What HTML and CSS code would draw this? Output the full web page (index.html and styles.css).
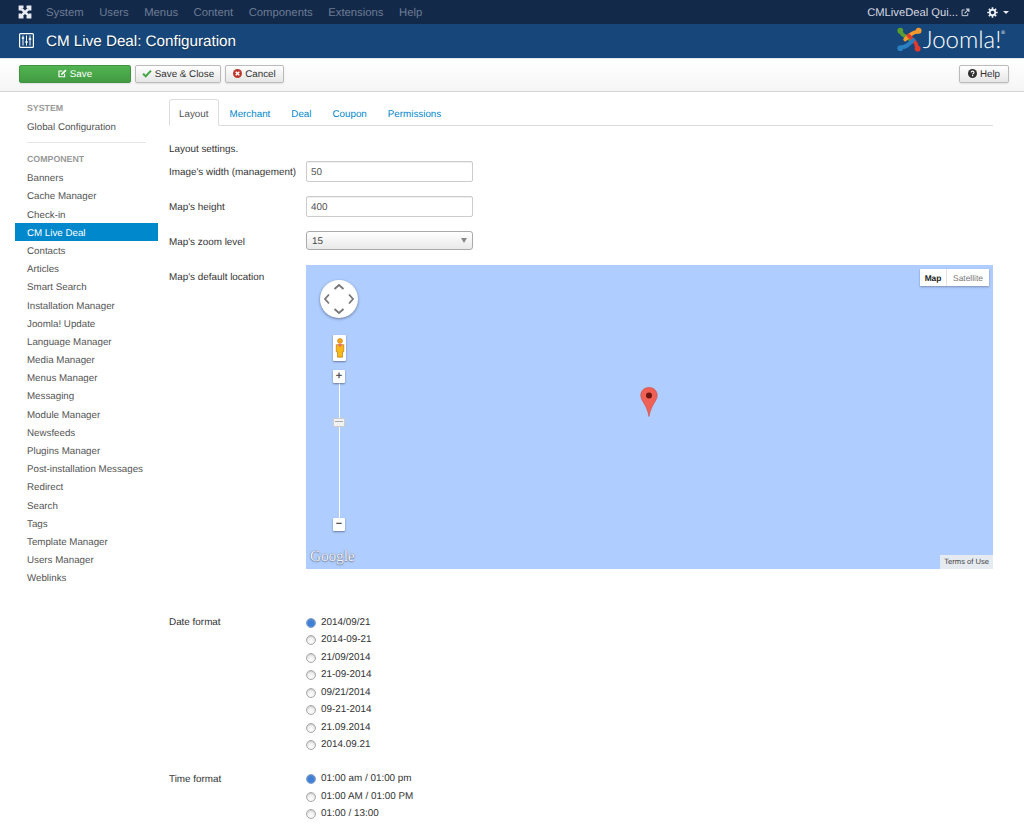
FILE: index.html
```html
<!DOCTYPE html>
<html lang="en">
<head>
<meta charset="utf-8">
<title>CM Live Deal: Configuration</title>
<link rel="stylesheet" href="styles.css">
</head>
<body>
<nav class="topnav">
  <svg class="brand" viewBox="0 0 16 16" width="16" height="16"><g fill="none" stroke="#e8ebf0" stroke-width="2.400"><path d="M4 4.500 L12 12"/><path d="M12 4.500 L4 12"/><path d="M2.800 6.500V2.800H6.500M9.500 2.800h3.700V6.500M13.200 9.500v3.700H9.500M6.500 13.200H2.800V9.500"/></g></svg>
  <ul class="menu">
    <li>System</li><li>Users</li><li>Menus</li><li>Content</li><li>Components</li><li>Extensions</li><li>Help</li>
  </ul>
  <div class="nav-right">
    <span class="site">CMLiveDeal Qui...</span>
    <svg class="ext" viewBox="0 0 10 10" width="9" height="9"><path d="M7.500 5.800V8.500H1.200V2.200H4" fill="none" stroke="#c8ced8" stroke-width="1.100"/><path d="M4 6L8 2M5.500 1.200H8.800V4.500" fill="none" stroke="#c8ced8" stroke-width="1.300"/></svg>
    <svg class="gear" viewBox="0 0 12 12" width="11" height="11"><circle cx="6" cy="6" r="3" fill="none" stroke="#e8ebf0" stroke-width="2"/><path d="M6 .3v2.200M6 9.500v2.200M.3 6h2.200M9.500 6h2.200M2 2l1.500 1.500M8.500 8.500L10 10M10 2L8.500 3.500M3.500 8.500L2 10" stroke="#e8ebf0" stroke-width="1.800"/></svg>
    <span class="caret"></span>
  </div>
</nav>
<header class="titlebar">
  <svg class="title-icon" viewBox="0 0 15 15" width="15" height="15"><rect x=".6" y=".6" width="13.800" height="13.800" rx="1" fill="none" stroke="#fff" stroke-width="1.200"/><path d="M4 2.500v10M7.500 2.500v10M11 2.500v10" stroke="#fff" stroke-width="1"/><path d="M2.800 5h2.400M6.300 9h2.400M9.800 6h2.400" stroke="#fff" stroke-width="1.600"/></svg>
  <h1>CM Live Deal: Configuration</h1>
  <div class="logo">
    <svg viewBox="0 0 26 26" width="25" height="25"><g fill="none" stroke-width="4" stroke-linecap="round"><path d="M4 5.500 C6 10 11 9.500 16 15" stroke="#5a9e32"/><path d="M21 5 C15.500 5 12.500 9 8.500 13" stroke="#f29a2e"/><path d="M20.500 20.500 C20.500 15.500 16.500 13.500 12 9" stroke="#e03a2f"/><path d="M5 21 C10 21 13 17.500 17 13.500" stroke="#2a7fc1"/></g><circle cx="3.400" cy="3.900" r="3" fill="#5a9e32"/><circle cx="22.500" cy="3.900" r="3" fill="#f29a2e"/><circle cx="21.500" cy="22.500" r="3" fill="#e03a2f"/><circle cx="3.400" cy="22" r="3" fill="#2a7fc1"/></svg>
    <span class="wordmark">Joomla!</span><sup class="reg">®</sup>
  </div>
</header>
<div class="toolbar">
  <button class="btn btn-save"><svg viewBox="0 0 11 11" width="9" height="9"><path d="M8 5.800V9.500H1.200V2.500H5.500" fill="none" stroke="#fff" stroke-width="1.400"/><path d="M3.800 7.300l.5-2L9 .7l1.400 1.400-4.600 4.700z" fill="#fff"/></svg><span class="btn-label">Save</span></button>
  <button class="btn btn-close"><svg viewBox="0 0 12 10" width="10" height="9"><path d="M1.200 5.200L4.500 8.300 10.800 1.500" fill="none" stroke="#46a546" stroke-width="2.400"/></svg><span class="btn-label">Save &amp; Close</span></button>
  <button class="btn btn-cancel"><svg viewBox="0 0 10 10" width="9" height="9"><circle cx="5" cy="5" r="5" fill="#bd362f"/><path d="M3 3l4 4M7 3l-4 4" stroke="#fff" stroke-width="1.600"/></svg><span class="btn-label">Cancel</span></button>
  <button class="btn btn-help"><svg viewBox="0 0 10 10" width="9" height="9"><circle cx="5" cy="5" r="5" fill="#2f2f2f"/><path d="M3.400 3.900C3.500 2.800 4.200 2.400 5 2.400c1 0 1.700.5 1.700 1.400 0 1.200-1.600 1.200-1.600 2.200" fill="none" stroke="#fff" stroke-width="1.200"/><rect x="4.400" y="6.700" width="1.400" height="1.300" fill="#fff"/></svg><span class="btn-label">Help</span></button>
</div>
<div class="page">
  <aside class="sidebar">
    <div class="side-head">SYSTEM</div>
    <a class="side-link">Global Configuration</a>
    <div class="side-divider"></div>
    <div class="side-head">COMPONENT</div>
    <a class="side-link">Banners</a>
    <a class="side-link">Cache Manager</a>
    <a class="side-link">Check-in</a>
    <a class="side-link active">CM Live Deal</a>
    <a class="side-link">Contacts</a>
    <a class="side-link">Articles</a>
    <a class="side-link">Smart Search</a>
    <a class="side-link">Installation Manager</a>
    <a class="side-link">Joomla! Update</a>
    <a class="side-link">Language Manager</a>
    <a class="side-link">Media Manager</a>
    <a class="side-link">Menus Manager</a>
    <a class="side-link">Messaging</a>
    <a class="side-link">Module Manager</a>
    <a class="side-link">Newsfeeds</a>
    <a class="side-link">Plugins Manager</a>
    <a class="side-link">Post-installation Messages</a>
    <a class="side-link">Redirect</a>
    <a class="side-link">Search</a>
    <a class="side-link">Tags</a>
    <a class="side-link">Template Manager</a>
    <a class="side-link">Users Manager</a>
    <a class="side-link">Weblinks</a>
  </aside>
  <main class="content">
    <ul class="tabs">
      <li class="tab active">Layout</li><li class="tab">Merchant</li><li class="tab">Deal</li><li class="tab">Coupon</li><li class="tab">Permissions</li>
    </ul>
    <p class="intro">Layout settings.</p>
    <div class="row"><label>Image's width (management)</label><div class="input">50</div></div>
    <div class="row"><label>Map's height</label><div class="input">400</div></div>
    <div class="row"><label>Map's zoom level</label><div class="select">15<span class="sel-arrow"></span></div></div>
    <div class="row row-map"><label>Map's default location</label>
      <div class="map">
        <div class="pan">
          <svg viewBox="0 0 38 38" width="38" height="38"><g fill="none" stroke="#777" stroke-width="1.800"><path d="M14.500 9l4.500-4 4.500 4M14.500 29l4.500 4 4.500-4M9 14.500l-4 4.500 4 4.500M29 14.500l4 4.500-4 4.500"/></g></svg>
        </div>
        <div class="pegman">
          <svg viewBox="0 0 12 24" width="10" height="20"><circle cx="6" cy="3.500" r="3" fill="#f2a418" stroke="#b87a0c" stroke-width=".6"/><path d="M1.500 8h9v8.500H9V23H3v-6.500H1.500z" fill="#f7b819" stroke="#b87a0c" stroke-width=".8"/><path d="M3.500 7.500h5L6 11z" fill="#e8607a"/></svg>
        </div>
        <div class="zoom-track"></div>
        <div class="zoom-btn zoom-plus">+</div>
        <div class="zoom-thumb"></div>
        <div class="zoom-btn zoom-minus">−</div>
        <div class="map-type"><span class="mt-on">Map</span><span class="mt-off">Satellite</span></div>
        <svg class="pin" viewBox="0 0 18 30" width="18" height="30"><path d="M9 .5C4 .5 .8 4 .8 8.500c0 5.500 6.200 9 8.200 21 2-12 8.200-15.500 8.200-21C17.200 4 14 .5 9 .5z" fill="#ef6055" stroke="#cf4c42" stroke-width=".6"/><circle cx="9" cy="8.500" r="3" fill="#6b1510"/></svg>
        <div class="google">Google</div>
        <div class="terms">Terms of Use</div>
      </div>
    </div>
    <div class="row row-radio"><label>Date format</label>
      <div class="radios">
        <div class="radio"><span class="dot on"></span>2014/09/21</div>
        <div class="radio"><span class="dot"></span>2014-09-21</div>
        <div class="radio"><span class="dot"></span>21/09/2014</div>
        <div class="radio"><span class="dot"></span>21-09-2014</div>
        <div class="radio"><span class="dot"></span>09/21/2014</div>
        <div class="radio"><span class="dot"></span>09-21-2014</div>
        <div class="radio"><span class="dot"></span>21.09.2014</div>
        <div class="radio"><span class="dot"></span>2014.09.21</div>
      </div>
    </div>
    <div class="row row-radio"><label>Time format</label>
      <div class="radios">
        <div class="radio"><span class="dot on"></span>01:00 am / 01:00 pm</div>
        <div class="radio"><span class="dot"></span>01:00 AM / 01:00 PM</div>
        <div class="radio"><span class="dot"></span>01:00 / 13:00</div>
      </div>
    </div>
  </main>
</div>
</body>
</html>
```
FILE: styles.css
```css
* { box-sizing: border-box; }
html, body { margin: 0; padding: 0; height: 830px; overflow: hidden; }
body { background: #fff; color: #333; font: 9.900px/14px "Liberation Sans", Arial, sans-serif; text-rendering: geometricPrecision; }
ul { margin: 0; padding: 0; list-style: none; }

.topnav { height: 24px; background: #13294a; display: flex; align-items: center; padding-left: 17px; padding-right: 15px; }
.brand { flex: none; }
.menu { display: flex; gap: 15.500px; margin-left: 13px; font-size: 11.300px; line-height: 16px; padding-top: 2px; color: #6d7c93; }
.nav-right { margin-left: auto; display: flex; align-items: center; color: #d3d8e0; font-size: 11.200px; }
.site { padding-top: 1px; margin-right: -1px; }
.ext { margin-left: 4px; }
.gear { margin-left: 17px; }
.caret { margin-left: 5px; border: 3px solid transparent; border-top-color: #e8ebf0; border-bottom: 0; }

.titlebar { height: 34px; background: #17477a; display: flex; align-items: center; padding-left: 19px; padding-right: 19px; }
.title-icon { flex: none; margin-bottom: 2px; }
h1 { margin: 0 0 0 12px; padding-top: 2px; color: #fff; font-size: 15.200px; font-weight: 400; text-shadow: 0 1px 1px rgba(0,0,0,.4); }
.logo { margin-left: auto; display: flex; align-items: center; color: #fff; height: 100%; padding-bottom: 3px; }
.wordmark { font: 300 24px/26px Lato, sans-serif; margin-left: 1px; }
.reg { font-size: 5px; line-height: 5px; align-self: flex-start; margin-top: 7px; }

.toolbar { height: 34px; background: linear-gradient(#fff, #f5f5f5); border-top: 1px solid #e2e6ea; border-bottom: 1px solid #d4d4d4; display: flex; align-items: center; padding: 0 15px 3px 19px; gap: 4px; }
.btn { height: 18px; padding: 0; display: flex; align-items: center; justify-content: center; gap: 3px; font: 9.800px/14px "Liberation Sans", Arial, sans-serif; color: #333; background: linear-gradient(#fff, #e6e6e6); border: 1px solid #bbb; border-radius: 2px; box-shadow: 0 1px 2px rgba(0,0,0,.1); text-rendering: geometricPrecision; }
.btn-label { padding-top: 2px; }
.btn-save { width: 112px; color: #fff; background: linear-gradient(#51b351, #429b42); border-color: #3f9340; }
.btn-close { width: 86px; }
.btn-cancel { width: 59px; }
.btn-help { margin-left: auto; width: 50px; }

.page { display: flex; padding-left: 15px; padding-top: 7px; }
.sidebar { width: 143px; flex: none; color: #555; font-size: 9.750px; }
.side-head { height: 18px; padding: 1.500px 12px 0; font-size: 8.800px; font-weight: 700; color: #999; line-height: 14px; }
.side-link { display: block; height: 18.200px; line-height: 22px; padding: 0 12px; white-space: nowrap; }
.side-link.active { background: #0088cc; color: #fff; }
.side-divider { height: 1px; margin: 7px 12px 7px; background: #e5e5e5; }

.content { margin-left: 11px; width: 824px; }
.tabs { display: flex; height: 27px; border-bottom: 1px solid #ddd; color: #0088cc; font-size: 9.800px; }
.tab { height: 27px; padding: 0 10.500px; line-height: 31px; }
.tab.active { width: 50px; padding: 0 9px; color: #555; background: #fff; border: 1px solid #ddd; border-bottom-color: #fff; border-radius: 3px 3px 0 0; line-height: 30px; }
.intro { margin: 16px 0 0; height: 14px; line-height: 16px; }

.row { display: flex; margin-top: 5px; }
.row label { width: 137px; height: 21px; flex: none; line-height: 23px; }
.input { width: 167px; height: 21px; padding: 0 4px; line-height: 22px; color: #555; border: 1px solid #ccc; border-radius: 2px; box-shadow: inset 0 1px 1px rgba(0,0,0,.07); }
.row + .row { margin-top: 14px; }
.select { position: relative; width: 167px; height: 19px; padding: 0 5px; line-height: 19px; color: #444; background: linear-gradient(#fff, #e9e9e9); border: 1px solid #aaa; border-radius: 3px; }
.sel-arrow { position: absolute; right: 5px; top: 6px; border: 3.500px solid transparent; border-top: 5px solid #888; border-bottom: 0; }

.row + .row-map { margin-top: 13px; }
.row-map label { line-height: 14px; padding-top: 6px; }
.map { position: relative; width: 687px; height: 304px; background: #afcdff; overflow: hidden; }
.pan { position: absolute; left: 14px; top: 15px; width: 38px; height: 38px; border-radius: 50%; background: #fff; box-shadow: 0 1px 3px rgba(0,0,0,.4); }
.pegman { position: absolute; left: 27px; top: 70px; width: 13px; height: 26px; background: #fff; box-shadow: 0 1px 2px rgba(0,0,0,.4); border-radius: 1px; padding: 3px 1.500px; display: flex; }
.zoom-track { position: absolute; left: 33px; top: 110px; width: 1px; height: 150px; background: #fff; }
.zoom-btn { position: absolute; left: 27px; width: 12px; height: 13px; background: #fff; color: #555; border-radius: 1px; box-shadow: 0 1px 2px rgba(0,0,0,.4); font: 700 11px/12px "Liberation Sans", sans-serif; text-align: center; }
.zoom-plus { top: 105px; }
.zoom-minus { top: 253px; }
.zoom-thumb { position: absolute; left: 27px; top: 153px; width: 12px; height: 9px; background: #f2f2f2; border: 1px solid #ccc; border-radius: 1px; }
.zoom-thumb::after { content: ""; display: block; margin: 2px 1px; height: 1px; background: #aaa; }
.map-type { position: absolute; right: 4px; top: 4px; height: 17px; display: flex; background: #fff; font-size: 8.400px; line-height: 18px; box-shadow: 0 1px 2px rgba(0,0,0,.3); }
.mt-on { width: 27px; text-align: center; font-weight: 700; color: #222; border-right: 1px solid #e4e4e4; }
.mt-off { width: 42px; text-align: center; color: #777; }
.pin { position: absolute; left: 334px; top: 122px; }
.google { position: absolute; left: 4px; bottom: 3px; font: 15.500px/18px "Liberation Serif", serif; color: #eef2fa; text-shadow: 0 0 1px #556, 0 1px 1px rgba(80,90,110,.5); letter-spacing: -.2px; }
.terms { position: absolute; right: 0; bottom: 0; height: 14px; padding: 0 4px; background: rgba(240,240,240,.85); font-size: 7.600px; line-height: 14px; color: #444; }

.row-radio label { line-height: 17.500px; }
.row + .row-radio { margin-top: 45px; }
.row-radio + .row-radio { margin-top: 16.500px; }
.radio { display: flex; align-items: center; height: 17.500px; gap: 5px; color: #333; white-space: nowrap; }
.dot { width: 10px; height: 10px; border-radius: 50%; background: radial-gradient(circle at 50% 70%, #fff, #dcdcdc); border: 1px solid #aaa; box-shadow: inset 0 1px 1px rgba(0,0,0,.12); }
.dot.on { background: radial-gradient(circle at 50% 55%, #3f7fd6 45%, #9cc0ee 100%); border-color: #7c9cc8; }
```
